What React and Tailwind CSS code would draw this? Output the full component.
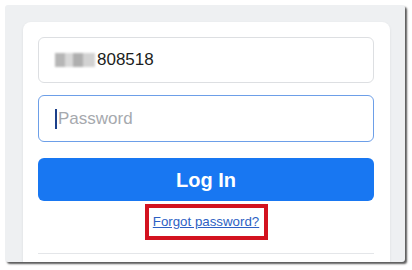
export default function App() {
    return (
        <div className="w-[412px] h-[270px] bg-white pt-[5px] pl-[5px] font-['Liberation_Sans',Arial,sans-serif]">
            {/* Screenshot frame */}
            <div className="w-[400px] h-[257px] bg-[#eef0f2] rounded-[3px] overflow-hidden shadow-[2px_2px_2px_rgba(0,0,0,0.65)] pt-[17px] pl-[18px]">
                {/* Login card */}
                <div className="w-[367px] h-[260px] bg-white rounded-lg shadow-[0_1px_3px_rgba(0,0,0,0.08)] pt-[15px] pl-[15px] pr-[16px]">
                    <div className="flex flex-col">
                        {/* Email / phone */}
                        <div className="h-[46px] border border-[#dddfe2] rounded-md flex items-center pl-[16px] text-[17px] text-[#1c1e21]">
                            <div className="flex mr-[2px] blur-[1.2px] opacity-80">
                                <span className="w-[10px] h-[14px] bg-[#a5a5a5]" />
                                <span className="w-[8px] h-[14px] bg-[#cfcfcf]" />
                                <span className="w-[10px] h-[14px] bg-[#9c9c9c]" />
                                <span className="w-[12px] h-[14px] bg-[#c8c8c8]" />
                            </div>
                            <span>808518</span>
                        </div>

                        {/* Password */}
                        <div className="mt-[12px] h-[47px] border border-[#6d9fe8] rounded-md flex items-center pl-[16px] text-[17px] text-[#a6a9ae]">
                            <span className="w-[2px] h-[20px] bg-[#1c3f8a] mr-[1px]" />
                            <span>Password</span>
                        </div>

                        {/* Log In */}
                        <button className="mt-[16px] h-[43px] bg-[#1877f2] rounded-md text-white text-[20px] font-bold flex items-center justify-center">
                            Log In
                        </button>

                        {/* Forgot password */}
                        <div className="mt-[3px] flex justify-center">
                            <div className="w-[123px] h-[36px] border-[4px] border-[#d3121f] flex items-center justify-center">
                                <span className="text-[13.3px] text-[#2d5fc4] underline">
                                    Forgot password?
                                </span>
                            </div>
                        </div>

                        {/* Divider */}
                        <div className="mt-[13px] border-t border-[#e4e6e9]" />
                    </div>
                </div>
            </div>
        </div>
    );
}
